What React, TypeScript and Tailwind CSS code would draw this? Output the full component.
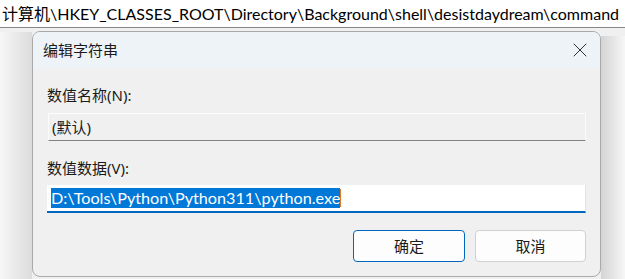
import { X } from "lucide-react";

const ui = { fontFamily: '"Noto Sans", "Noto Sans CJK SC", sans-serif' };
const narrow = { fontFamily: 'Lato, "Noto Sans CJK SC", sans-serif' };

export default function App() {
  return (
    <div className="w-[625px] h-[279px] overflow-hidden bg-[#f0f0f0] flex flex-col" style={ui}>
      {/* address bar of regedit behind the dialog */}
      <div
        className="h-[28px] shrink-0 bg-white border-b border-[#868686] flex items-center pl-[2px] text-[16px] leading-none text-black whitespace-nowrap"
        style={narrow}
      >
        计算机\HKEY_CLASSES_ROOT\Directory\Background\shell\desistdaydream\command
      </div>

      <div className="flex-1 flex">
        <div className="w-[32px] shrink-0 bg-gradient-to-r from-[#f7f7f7] to-[#dcdcdc] mt-[4px]" />

        <div className="w-[569px] shrink-0 flex flex-col">
          <div className="h-[3px] shrink-0 bg-[#f0f0f0]" />
          <div className="h-[246px] flex flex-col rounded-[8px] border border-[#a9a9a9] bg-[#f0f0f0] overflow-hidden">
            {/* title bar */}
            <div className="h-[36px] shrink-0 bg-[#eef3f8] flex items-center pl-[10px] pr-[8px]">
              <span className="flex-1 text-[15px] text-[#1a1a1a] leading-none">编辑字符串</span>
              <X size={24} strokeWidth={0.9} className="text-[#1a1a1a]" />
            </div>

            <div className="flex flex-col px-[14px]">
              <div className="mt-[17px] h-[20px] flex items-center text-[15px] text-[#1a1a1a]">数值名称(N):</div>
              <div className="mt-[8px] h-[28px] ml-[1px] bg-[#f0f0f0] border border-[#fbfbfb] border-b-[#838383] flex items-center pl-[3px] text-[15px] text-[#1a1a1a]">
                (默认)
              </div>

              <div className="mt-[17px] h-[20px] flex items-center text-[15px] text-[#1a1a1a]">数值数据(V):</div>
              <div className="mt-[7px] h-[28px] bg-white border-r border-[#dbe5f1] border-b-2 border-b-[#0067c0] flex items-center pl-[4px]">
                <span className="bg-[#0078d7] text-white text-[16.2px] leading-[20px] h-[20px]" style={narrow}>
                  D:\Tools\Python\Python311\python.exe
                </span>
                <span className="w-[1px] h-[18px] bg-[#e07b2a]" />
              </div>

              <div className="mt-[17px] flex justify-end gap-[10px]">
                <button className="w-[112px] h-[32px] rounded-[4px] border border-[#0067c0] bg-[#fdfdfd] text-[15px] text-[#1a1a1a]">
                  确定
                </button>
                <button className="w-[111px] h-[32px] rounded-[4px] border border-[#d0d0d0] bg-[#fdfdfd] text-[15px] text-[#1a1a1a]">
                  取消
                </button>
              </div>
            </div>
          </div>
        </div>

        <div className="flex-1 bg-gradient-to-r from-[#d4d4d4] to-[#f7f7f7] mt-[8px]" />
      </div>
    </div>
  );
}
